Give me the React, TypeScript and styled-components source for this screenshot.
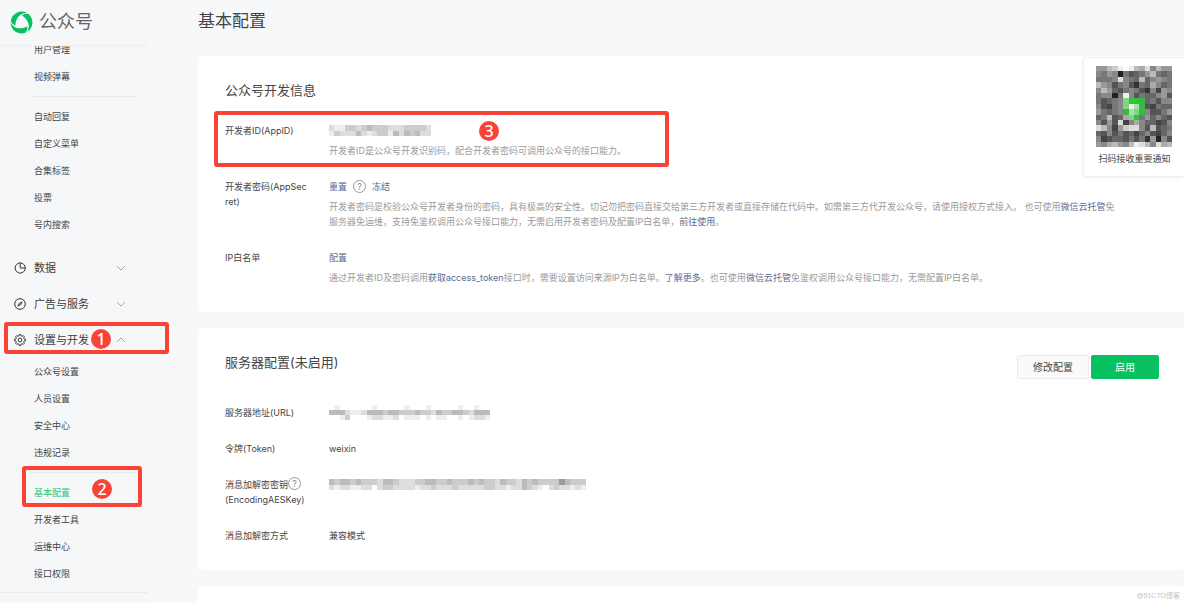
import React from "react";
import styled, { createGlobalStyle, css } from "styled-components";

const Global = createGlobalStyle`
  * { box-sizing: border-box; }
  body {
    margin: 0;
    background: #f6f8fa;
    color: #454545;
    font: 9px/15px Inter, "Noto Sans CJK SC", sans-serif;
  }
  h1, h2, p, dl, dd, dt, ul { margin: 0; padding: 0; font-weight: 400; }
  ul { list-style: none; }
  a { color: inherit; text-decoration: none; }
  button { font-family: inherit; }
`;

const Shell = styled.div`
  position: relative;
  display: flex;
  height: 100vh;
  overflow: hidden;
`;

const Sidebar = styled.aside`
  flex: 0 0 148px;
  display: flex;
  flex-direction: column;
  background: #f6f7f9;
`;

const Brand = styled.a`
  position: relative;
  z-index: 1;
  flex: 0 0 46px;
  display: flex;
  align-items: center;
  gap: 6px;
  padding: 0 0 1px 10px;
  border-bottom: 1px solid #eceef0;
  background: #f6f7f9;
  color: #666;
  font-size: 18px;
  line-height: 24px;
`;

const Nav = styled.nav`
  margin-top: -10px;
  padding-bottom: 5px;
  border-bottom: 1px solid #e9ebed;
`;

const NavRule = styled.hr`
  height: 1px;
  margin: 6px 12px 6px 31px;
  border: 0;
  background: #e8eaec;
`;

const SubItem = styled.li`
  position: relative;
`;

const SubLink = styled.a<{ $active?: boolean }>`
  display: block;
  padding-left: 34px;
  line-height: 27px;
  color: ${(p) => (p.$active ? "#2bc574" : "#444")};
`;

const Section = styled.div<{ $first?: boolean }>`
  position: relative;
  margin-top: ${(p) => (p.$first ? "12px" : "0")};
`;

const SectionButton = styled.button`
  display: flex;
  align-items: center;
  width: 100%;
  height: 36px;
  padding: 0 22px 0 14px;
  border: 0;
  background: none;
  color: #3c3c3c;
  font-size: 11px;
  line-height: 16px;
  text-align: left;
`;

const SectionName = styled.span`
  flex: 1;
  padding-left: 8px;
`;

const Main = styled.main`
  flex: 1;
  min-width: 0;
  padding: 9px 0 0 50px;
  background: #f6f8fa;
`;

const PageTitle = styled.h1`
  margin-bottom: 23px;
  font-size: 17px;
  line-height: 24px;
`;

const Card = styled.section`
  min-height: 60px;
  margin-bottom: 16px;
  padding: 24px 25px 27px 27px;
  border-radius: 4px;
  background: #fff;
`;

const CardHead = styled.header`
  display: flex;
  justify-content: space-between;
  align-items: flex-start;
  margin-bottom: 23px;
`;

const CardTitle = styled.h2`
  font-size: 13px;
  line-height: 20px;
`;

const Actions = styled.div`
  display: flex;
  gap: 2px;
  margin: 3px 0;
`;

const Button = styled.button<{ $primary?: boolean }>`
  min-width: ${(p) => (p.$primary ? "68px" : "72px")};
  height: 24px;
  padding: 0;
  border: 1px solid ${(p) => (p.$primary ? "#07c160" : "#eaebec")};
  border-radius: 2px;
  background: ${(p) => (p.$primary ? "#07c160" : "#fafafa")};
  color: ${(p) => (p.$primary ? "#fff" : "#454545")};
  font-size: 10px;
  line-height: 16px;
`;

const Fields = styled.dl`
  display: flex;
  flex-direction: column;
  gap: 21px;
`;

const Field = styled.div`
  position: relative;
  display: grid;
  grid-template-columns: 84px 1fr;
  column-gap: 20px;
`;

const Label = styled.dt`
  word-break: break-all;
`;

const Value = styled.dd`
  min-width: 0;
`;

const ValueLine = styled.div`
  display: flex;
  align-items: center;
  gap: 6px;
  min-height: 15px;
`;

const Note = styled.p`
  margin-top: 5px;
  color: #9a9a9a;
`;

const Link = styled.a`
  color: #576b95;
`;

const markFrame = css`
  position: absolute;
  z-index: 2;
  border: 4px solid #f94336;
  border-radius: 3px;
  pointer-events: none;
`;

const SectionMark = styled.div`
  ${markFrame}
  inset: 0 -21px 4px 4px;
`;

const ItemMark = styled.div`
  ${markFrame}
  inset: -13px 6px -1px 22px;
`;

const FieldMark = styled.div`
  ${markFrame}
  top: -12px;
  bottom: -9px;
  left: -11px;
  width: 455px;
`;

const Step = styled.span<{ $left: number; $top: number }>`
  position: absolute;
  top: ${(p) => p.$top}px;
  left: ${(p) => p.$left}px;
  width: 20px;
  height: 20px;
  border-radius: 50%;
  background: #f94336;
  color: #fff;
  font: 500 16px/20px "Noto Sans", sans-serif;
  text-align: center;
`;

const QrCard = styled.aside`
  position: absolute;
  top: 57px;
  right: 0;
  width: 101px;
  padding: 8px 11px 10px 12px;
  border: 1px solid #eceeef;
  border-right: 0;
  border-radius: 3px;
  background: #fff;
  box-shadow: 0 1px 4px rgba(0, 0, 0, 0.05);
  text-align: center;
`;

const QrText = styled.p`
  margin-top: 4px;
`;

const Watermark = styled.small`
  position: absolute;
  right: 4px;
  bottom: 2px;
  color: #c4c4c4;
  font: 7px/10px "Liberation Sans", "Noto Sans CJK SC", sans-serif;
`;

const Svg = styled.svg`
  display: block;
  flex: none;
`;

const Logo = () => (
  <Svg width="23" height="23" viewBox="-11.5 -11.5 23 23" fill="#07c160" aria-hidden="true">
    {[0, 120, 240].map((a) => (
      <path
        key={a}
        transform={`rotate(${a})`}
        d="M-10.8 -1.800A11 11 0 0 1 5.300 -9.600C2.500 -9.600 -0.500 -8.600 -2.500 -6.600C-4.500 -4.600 -6 -1 -6.300 3C-8.500 2.200 -10.200 .5 -10.800 -1.800Z"
      />
    ))}
  </Svg>
);

const Icon = ({ children }: { children: React.ReactNode }) => (
  <Svg width="12" height="12" viewBox="0 0 12 12" fill="none" stroke="#333" strokeWidth="1" aria-hidden="true">
    {children}
  </Svg>
);

const PieIcon = () => (
  <Icon>
    <path d="M6.200 .9A5.100 5.100 0 1 0 11.300 6H6.200Z" />
    <path d="M6.200 .9A5.100 5.100 0 0 1 11.300 6" />
  </Icon>
);

const CompassIcon = () => (
  <Icon>
    <circle cx="6" cy="6" r="5.300" />
    <path d="M8.800 3.200L7 7L3.200 8.800L5 5Z" fill="#333" stroke="none" />
    <circle cx="6" cy="6" r="0.700" fill="#f6f7f9" stroke="none" />
  </Icon>
);

const gearOutline =
  Array.from({ length: 8 }, (_, i) => {
    const at = (r: number, deg: number) => {
      const t = ((i * 45 + deg) * Math.PI) / 180;
      return `${(6 + r * Math.cos(t)).toFixed(2)} ${(6 + r * Math.sin(t)).toFixed(2)}`;
    };
    return `${i ? "L" : "M"}${at(4.3, -14)}L${at(5.5, -9)}L${at(5.5, 9)}L${at(4.3, 14)}`;
  }).join("") + "Z";

const GearIcon = () => (
  <Icon>
    <path strokeLinejoin="round" d={gearOutline} />
    <circle cx="6" cy="6" r="1.900" />
  </Icon>
);

const Chevron = ({ up }: { up?: boolean }) => (
  <Svg width="10" height="6" viewBox="0 0 10 6" fill="none" stroke="#aaa" aria-hidden="true">
    <path d={up ? "M1 5L5 1L9 5" : "M1 1L5 5L9 1"} />
  </Svg>
);

const HelpButton = styled.button`
  display: inline-flex;
  justify-content: center;
  align-items: center;
  width: 13px;
  height: 13px;
  padding: 0;
  border: 1px solid #999;
  border-radius: 50%;
  background: none;
  color: #888;
  font-size: 9px;
  line-height: 11px;
  vertical-align: top;
`;

const Help = () => <HelpButton aria-label="帮助">?</HelpButton>;

/* Each digit is one cell of grey: 0 is black, f is white, g to k are greens. */
const greens: Record<string, string> = { g: "#3db544", h: "#7fd584", i: "#2fc43a", j: "#a9dfac", k: "#e4f6e5" };

const Mosaic = ({ rows, width, height }: { rows: string[]; width: number; height: number }) => (
  <Svg
    width={width}
    height={height}
    viewBox={`0 0 ${rows[0].length} ${rows.length}`}
    preserveAspectRatio="none"
    shapeRendering="crispEdges"
    aria-hidden="true"
  >
    {rows.flatMap((row, y) =>
      [...row].map((c, x) => (
        <rect key={`${x}-${y}`} x={x} y={y} width="1" height="1" fill={greens[c] ?? `#${c}${c}${c}`} />
      ))
    )}
  </Svg>
);

const qrRows = [
  "99bcefebad8b99",
  "8798275679b767",
  "7778d876b68987",
  "b985785376a867",
  "8b965787538498",
  "78827e85766895",
  "75678hiig67588",
  "85478hkjg54766",
  "97678gjhg85579",
  "67b56ahi796865",
  "8595d48a866458",
  "db849cdd85b567",
  "65857564685468",
  "84566575739285",
  "98ab98bedb8dab",
];
const appIdRows = ["deeccdcbcccdddccccd", "ecdddbdedccebdbcbdd"];
const urlRows = [
  "feffffffefffffefffefffffeffeff",
  "bbbdeedbbbcbbcccbccdbccbbcdbbb",
  "ffecfffeddeedfeeefefeeffefedde",
];
const keyRows = [
  "bcbbcbcccdbbcdddccbbccbcccbcbccdbccdbcbcccc9bccc",
  "deddeeddfdccddddeddcdddcdddddccddeddbcdefdcddede",
];

type Entry = { name: string; active?: boolean };

const Links = ({ items }: { items: Entry[] }) => (
  <ul>
    {items.map(({ name, active }) => (
      <SubItem key={name}>
        <SubLink href="#" $active={active} aria-current={active ? "page" : undefined}>
          {name}
        </SubLink>
        {active && (
          <>
            <ItemMark />
            <Step $left={92} $top={0}>2</Step>
          </>
        )}
      </SubItem>
    ))}
  </ul>
);

const list = (...names: string[]): Entry[] => names.map((name) => ({ name }));

export default function App() {
  return (
    <Shell>
      <Global />
      <Sidebar>
        <Brand href="#">
          <Logo />
          公众号
        </Brand>
        <Nav>
          <Links items={list("用户管理", "视频弹幕")} />
          <NavRule />
          <Links items={list("自动回复", "自定义菜单", "合集标签", "投票", "号内搜索")} />
          <Section $first>
            <SectionButton aria-expanded="false">
              <PieIcon />
              <SectionName>数据</SectionName>
              <Chevron />
            </SectionButton>
          </Section>
          <Section>
            <SectionButton aria-expanded="false">
              <CompassIcon />
              <SectionName>广告与服务</SectionName>
              <Chevron />
            </SectionButton>
          </Section>
          <Section>
            <SectionButton aria-expanded="true">
              <GearIcon />
              <SectionName>设置与开发</SectionName>
              <Chevron up />
            </SectionButton>
            <SectionMark />
            <Step $left={91} $top={7}>1</Step>
          </Section>
          <Links items={list("公众号设置", "人员设置", "安全中心", "违规记录")} />
          <NavRule />
          <Links items={[{ name: "基本配置", active: true }, ...list("开发者工具", "运维中心", "接口权限")]} />
        </Nav>
      </Sidebar>

      <Main>
        <PageTitle>基本配置</PageTitle>

        <Card>
          <CardHead>
            <CardTitle>公众号开发信息</CardTitle>
          </CardHead>
          <Fields>
            <Field>
              <Label>开发者ID(AppID)</Label>
              <Value>
                <ValueLine>
                  <Mosaic rows={appIdRows} width={102} height={11} />
                </ValueLine>
                <Note>开发者ID是公众号开发识别码，配合开发者密码可调用公众号的接口能力。</Note>
                <FieldMark />
                <Step $left={254} $top={-2}>3</Step>
              </Value>
            </Field>
            <Field>
              <Label>开发者密码(AppSecret)</Label>
              <Value>
                <ValueLine>
                  <Link href="#">重置</Link>
                  <Help />
                  <Link href="#">冻结</Link>
                </ValueLine>
                <Note>
                  开发者密码是校验公众号开发者身份的密码，具有极高的安全性。切记勿把密码直接交给第三方开发者或直接存储在代码中。如需第三方代开发公众号，请使用授权方式接入。 也可使用
                  <Link href="#">微信云托管</Link>免<br />
                  服务器免运维，支持免鉴权调用公众号接口能力，无需启用开发者密码及配置IP白名单，
                  <Link href="#">前往使用</Link>。
                </Note>
              </Value>
            </Field>
            <Field>
              <Label>IP白名单</Label>
              <Value>
                <ValueLine>
                  <Link href="#">配置</Link>
                </ValueLine>
                <Note>
                  通过开发者ID及密码调用<Link href="#">获取access_token</Link>
                  接口时，需要设置访问来源IP为白名单。<Link href="#">了解更多</Link>。也可使用
                  <Link href="#">微信云托管</Link>免鉴权调用公众号接口能力，无需配置IP白名单。
                </Note>
              </Value>
            </Field>
          </Fields>
        </Card>

        <Card>
          <CardHead>
            <CardTitle>服务器配置(未启用)</CardTitle>
            <Actions>
              <Button>修改配置</Button>
              <Button $primary>启用</Button>
            </Actions>
          </CardHead>
          <Fields>
            <Field>
              <Label>服务器地址(URL)</Label>
              <Value>
                <Mosaic rows={urlRows} width={161} height={15} />
              </Value>
            </Field>
            <Field>
              <Label>令牌(Token)</Label>
              <Value>weixin</Value>
            </Field>
            <Field>
              <Label>
                消息加解密密钥
                <Help />
                <br />
                (EncodingAESKey)
              </Label>
              <Value>
                <ValueLine>
                  <Mosaic rows={keyRows} width={257} height={11} />
                </ValueLine>
              </Value>
            </Field>
            <Field>
              <Label>消息加解密方式</Label>
              <Value>兼容模式</Value>
            </Field>
          </Fields>
        </Card>

        <Card />
      </Main>

      <QrCard>
        <Mosaic rows={qrRows} width={76} height={81} />
        <QrText>扫码接收重要通知</QrText>
      </QrCard>
      <Watermark>@51CTO博客</Watermark>
    </Shell>
  );
}
